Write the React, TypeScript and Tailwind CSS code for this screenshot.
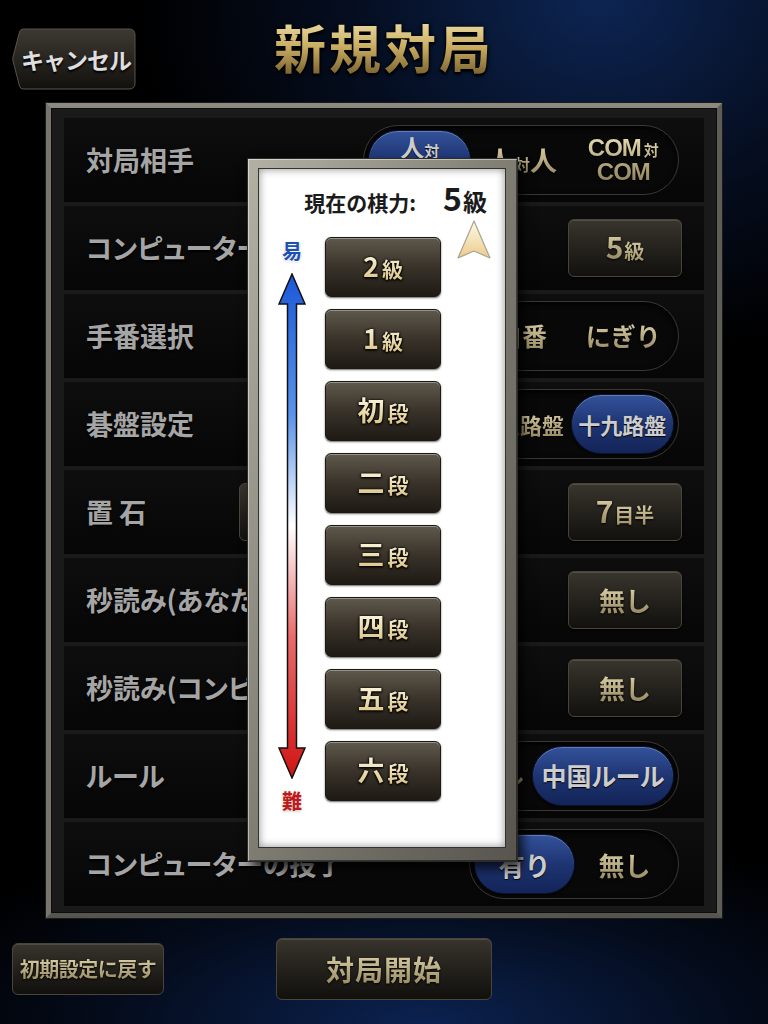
import React from 'react';

// gold lettering used on the dark buttons
function Gold({ children, className = '' }: { children: React.ReactNode; className?: string }) {
  return (
    <span
      className={`inline-block bg-linear-to-b from-[#e6dbb2] to-[#8f8159] bg-clip-text text-transparent [filter:drop-shadow(0_1px_1px_#000)] ${className}`}
    >
      {children}
    </span>
  );
}

function ValueButton({ big, small }: { big: string; small?: string }) {
  return (
    <div className="ml-auto w-[114px] h-[58px] rounded-[6px] border border-[#4a453b] bg-linear-to-b from-[#39352e] to-[#12110e] shadow-[inset_0_1px_0_rgba(255,255,255,0.12),0_1px_2px_#000] flex items-center justify-center font-bold">
      {small ? (
        <span className="flex items-baseline">
          <Gold className="text-[30px] leading-[34px]">{big}</Gold>
          <Gold className="text-[20px] leading-[34px] ml-[1px]">{small}</Gold>
        </span>
      ) : (
        <Gold className="text-[26px] leading-[34px]">{big}</Gold>
      )}
    </div>
  );
}

function Segmented({
  options,
  selected,
  width,
}: {
  options: React.ReactNode[];
  selected: number;
  width: string;
}) {
  return (
    <div
      className={`ml-auto mr-[3px] ${width} h-[70px] rounded-full border border-[#3b3833] bg-[#080808] p-[4px] flex shadow-[inset_0_2px_5px_rgba(0,0,0,0.9)]`}
    >
      {options.map((o, i) =>
        i === selected ? (
          <div
            key={i}
            className="flex-1 rounded-full border border-[#0a1431] bg-linear-to-b from-[#34529a] via-[#1e3573] to-[#132458] shadow-[inset_0_1px_0_rgba(255,255,255,0.25),0_1px_2px_#000] flex items-center justify-center font-bold text-[#cdcdcd] [text-shadow:0_1px_1px_#000]"
          >
            {o}
          </div>
        ) : (
          <div key={i} className="flex-1 flex items-center justify-center font-bold">
            <Gold>{o}</Gold>
          </div>
        ),
      )}
    </div>
  );
}

function Row({ label, children }: { label: string; children?: React.ReactNode }) {
  return (
    <div className="h-[84px] flex items-center px-[22px] bg-linear-to-b from-[#0e0e0e] to-[#060606]">
      <span className="text-[27px] font-bold text-[#a5a5a5] whitespace-nowrap [font-feature-settings:'palt'] [text-shadow:0_2px_2px_#000]">
        {label}
      </span>
      {children}
    </div>
  );
}

function GradeButton({ big, small }: { big: string; small: string }) {
  return (
    <div className="w-[116px] h-[60px] rounded-[6px] border border-[#1c1915] bg-linear-to-b from-[#5f584c] via-[#39332a] to-[#1e1a14] shadow-[inset_0_1px_0_rgba(255,255,255,0.35),0_1px_2px_rgba(0,0,0,0.6)] flex items-center justify-center font-bold">
      <span className="flex items-baseline bg-linear-to-b from-[#fffbe6] to-[#d9bf7c] bg-clip-text text-transparent [filter:drop-shadow(0_0_1px_#000)_drop-shadow(0_1px_1px_#000)]">
        <span className="text-[27px] leading-[32px]">{big}</span>
        <span className="text-[21px] leading-[32px] ml-[3px]">{small}</span>
      </span>
    </div>
  );
}

function DifficultyArrow() {
  return (
    <svg width="28" height="506" viewBox="0 0 28 506" className="mt-[10px]">
      <defs>
        <linearGradient id="easyHard" x1="0" y1="0" x2="0" y2="1">
          <stop offset="0" stopColor="#1b58d8" />
          <stop offset="0.28" stopColor="#5a93ea" />
          <stop offset="0.5" stopColor="#ffffff" />
          <stop offset="0.72" stopColor="#ea6a6a" />
          <stop offset="1" stopColor="#cf1414" />
        </linearGradient>
      </defs>
      <path
        d="M14 1 L27 31 L18.5 31 L18.5 475 L27 475 L14 505 L1 475 L9.5 475 L9.5 31 L1 31 Z"
        fill="url(#easyHard)"
        stroke="#111"
        strokeWidth="1.5"
        strokeLinejoin="miter"
      />
    </svg>
  );
}

function Pointer() {
  return (
    <svg width="34" height="39" viewBox="0 0 34 39">
      <defs>
        <linearGradient id="ptr" x1="0" y1="0" x2="0" y2="1">
          <stop offset="0" stopColor="#fffbea" />
          <stop offset="1" stopColor="#eccb8a" />
        </linearGradient>
      </defs>
      <path d="M17 1 L33 38 L17 31 L1 38 Z" fill="url(#ptr)" stroke="#a8a290" strokeWidth="1.2" strokeLinejoin="round" />
    </svg>
  );
}

function CancelButton() {
  return (
    <div className="relative mt-[28px] ml-[12px] w-[124px] h-[62px] flex items-center justify-center">
      <svg className="absolute inset-0" width="124" height="62" viewBox="0 0 124 62">
        <defs>
          <linearGradient id="cancelBg" x1="0" y1="0" x2="0" y2="1">
            <stop offset="0" stopColor="#3d3932" />
            <stop offset="1" stopColor="#13110e" />
          </linearGradient>
        </defs>
        <path
          d="M11 1 H117 Q123 1 123 7 V55 Q123 61 117 61 H11 Q8.5 61 7.5 58 L1 33 Q0.5 31 1 29 L7.5 4 Q8.5 1 11 1 Z"
          fill="url(#cancelBg)"
          stroke="#58534a"
          strokeWidth="1"
        />
      </svg>
      <span className="relative pl-[4px] text-[23px] font-bold text-[#dedede] tracking-[-1px] [text-shadow:0_2px_2px_#000]">
        キャンセル
      </span>
    </div>
  );
}

export default function App() {
  return (
    <div className="relative w-[768px] h-[1024px] overflow-hidden bg-black bg-[radial-gradient(ellipse_60%_35%_at_78%_0%,#0d2553_0%,rgba(8,22,52,0.6)_55%,transparent_100%),radial-gradient(ellipse_70%_20%_at_55%_100%,#0b2250_0%,rgba(8,22,52,0.5)_60%,transparent_100%)] font-['Noto_Sans_CJK_JP','Noto_Sans',sans-serif] flex flex-col">
      {/* header */}
      <div className="h-[103px] grid grid-cols-[148px_1fr_148px]">
        <CancelButton />
        <h1 className="mt-[19px] text-center text-[52px] leading-[56px] font-bold tracking-[3px]">
          <span className="inline-block bg-linear-to-b from-[#eee0a8] via-[#c9ac62] to-[#7a6330] bg-clip-text text-transparent [filter:drop-shadow(0_2px_1px_#000)_drop-shadow(0_0_2px_#000)]">
            新規対局
          </span>
        </h1>
        <div />
      </div>

      {/* settings panel */}
      <div className="mx-[46px] h-[815px] border-[5px] border-t-[#8b8980] border-l-[#77756d] border-r-[#5e5c56] border-b-[#56544e] shadow-[0_0_0_1px_#1a1a18]">
        <div className="h-full bg-[#1a1a1a] px-[13px] pt-[10px] pb-[7px] flex flex-col gap-[4px] shadow-[inset_0_0_0_1px_#0c0c0c]">
          <Row label="対局相手">
            <Segmented
              width="w-[316px]"
              selected={0}
              options={[
                <span className="flex flex-col items-center leading-[22px]">
                  <span className="flex items-baseline">
                    <span className="text-[24px]">人</span>
                    <span className="text-[15px]">対</span>
                  </span>
                  <span className="text-[21px]">COM</span>
                </span>,
                <span className="flex items-baseline">
                  <span className="text-[27px]">人</span>
                  <span className="text-[16px]">対</span>
                  <span className="text-[27px]">人</span>
                </span>,
                <span className="flex flex-col items-center leading-[22px] font-['Liberation_Sans',sans-serif]">
                  <span className="flex items-baseline">
                    <span className="text-[24px] tracking-[-1px]">COM</span>
                    <span className="text-[15px] ml-[3px] font-['Noto_Sans_CJK_JP',sans-serif]">対</span>
                  </span>
                  <span className="text-[24px] tracking-[-1px]">COM</span>
                </span>,
              ]}
            />
          </Row>
          <Row label="コンピューターの強さ">
            <ValueButton big="5" small="級" />
          </Row>
          <Row label="手番選択">
            <Segmented
              width="w-[316px]"
              selected={0}
              options={[
                <span className="text-[25px]">黒番</span>,
                <span className="text-[25px]">白番</span>,
                <span className="text-[25px]">にぎり</span>,
              ]}
            />
          </Row>
          <Row label="碁盤設定">
            <Segmented
              width="w-[316px]"
              selected={2}
              options={[
                <span className="text-[22px]">九路盤</span>,
                <span className="text-[22px]">十三路盤</span>,
                <span className="text-[22px]">十九路盤</span>,
              ]}
            />
          </Row>
          <Row label="置 石">
            <div className="ml-[93px] w-[114px] h-[58px] rounded-[6px] border border-[#4a453b] bg-linear-to-b from-[#39352e] to-[#12110e] flex items-center justify-center font-bold">
              <Gold className="text-[26px]">無し</Gold>
            </div>
            <span className="ml-[20px] text-[24px] font-bold text-[#a5a5a5]">コミ</span>
            <ValueButton big="7" small="目半" />
          </Row>
          <Row label="秒読み(あなた)">
            <ValueButton big="無し" />
          </Row>
          <Row label="秒読み(コンピューター)">
            <ValueButton big="無し" />
          </Row>
          <Row label="ルール">
            <Segmented
              width="w-[292px]"
              selected={1}
              options={[
                <span className="text-[25px] [font-feature-settings:'palt']">日本ルール</span>,
                <span className="text-[25px] [font-feature-settings:'palt']">中国ルール</span>,
              ]}
            />
          </Row>
          <Row label="コンピューターの投了">
            <Segmented
              width="w-[210px]"
              selected={0}
              options={[
                <span className="text-[26px]">有り</span>,
                <span className="text-[26px]">無し</span>,
              ]}
            />
          </Row>
        </div>
      </div>

      {/* footer */}
      <div className="h-[102px] grid grid-cols-[1fr_auto_1fr] items-center">
        <div className="justify-self-start ml-[12px] w-[152px] h-[52px] rounded-[6px] border border-[#4a453b] bg-linear-to-b from-[#38342d] to-[#11100d] shadow-[inset_0_1px_0_rgba(255,255,255,0.12)] flex items-center justify-center font-bold">
          <Gold className="text-[20px] tracking-[-0.5px]">初期設定に戻す</Gold>
        </div>
        <div className="w-[216px] h-[62px] rounded-[6px] border border-[#4a453b] bg-linear-to-b from-[#38342d] to-[#11100d] shadow-[inset_0_1px_0_rgba(255,255,255,0.12)] flex items-center justify-center font-bold">
          <Gold className="text-[28px] tracking-[1px]">対局開始</Gold>
        </div>
        <div />
      </div>

      {/* grade picker dialog */}
      <div className="absolute left-[247px] top-[158px] w-[271px] h-[704px] pt-[9px] pl-[10px] pr-[11px] pb-[13px] border border-[#2b2b27] bg-linear-to-br from-[#b3b0a4] via-[#7f7c72] to-[#57554e] shadow-[5px_7px_10px_rgba(0,0,0,0.75),inset_1px_1px_0_rgba(255,255,255,0.45),inset_-1px_-1px_0_rgba(0,0,0,0.5)]">
        <div className="h-full bg-white border border-[#34342f] shadow-[inset_0_0_8px_rgba(0,0,0,0.45)] flex flex-col">
          <div className="h-[68px] pt-[13px] pr-[18px] flex items-baseline justify-end font-bold text-[#1b1b1b]">
            <span className="text-[21px] leading-[30px]">現在の棋力:</span>
            <span className="ml-[27px] text-[32px] leading-[30px]">5</span>
            <span className="text-[24px] leading-[30px] ml-[1px]">級</span>
          </div>
          <div className="flex">
            <div className="ml-[19px] w-[28px] flex flex-col items-center">
              <span className="mt-[2px] text-[20px] leading-[24px] font-bold text-[#1c4fb3] [text-shadow:0_1px_1px_#fff,0_1px_3px_rgba(0,0,0,0.25)]">
                易
              </span>
              <DifficultyArrow />
              <span className="mt-[10px] text-[20px] leading-[24px] font-bold text-[#c41818] [text-shadow:0_1px_3px_rgba(0,0,0,0.25)]">
                難
              </span>
            </div>
            <div className="ml-[19px] flex flex-col gap-[12px]">
              <GradeButton big="2" small="級" />
              <GradeButton big="1" small="級" />
              <GradeButton big="初" small="段" />
              <GradeButton big="二" small="段" />
              <GradeButton big="三" small="段" />
              <GradeButton big="四" small="段" />
              <GradeButton big="五" small="段" />
              <GradeButton big="六" small="段" />
            </div>
            <div className="ml-[16px] -mt-[17px]">
              <Pointer />
            </div>
          </div>
        </div>
      </div>
    </div>
  );
}
